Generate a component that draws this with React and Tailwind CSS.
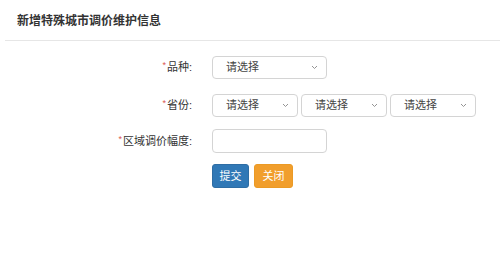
import React from 'react';

const Chevron = () => (
  <svg width="7" height="5" viewBox="0 0 7 5" className="shrink-0">
    <path d="M1 1 L3.5 3.5 L6 1" fill="none" stroke="#888" strokeWidth="0.9" />
  </svg>
);

const Select = ({ className }) => (
  <div className={`h-[23px] flex items-center justify-between pl-[13px] pr-[8px] border border-[#d4d4d4] rounded-[4px] bg-white text-[11px] text-[#444] ${className}`}>
    <span>请选择</span>
    <Chevron />
  </div>
);

const Label = ({ children }) => (
  <div className="w-[192px] shrink-0 text-right text-[11px] text-[#333] flex justify-end items-center">
    <span className="text-[#d9534f] text-[9px] leading-none mr-[1px] -mt-[4px]">*</span>
    <span>{children}</span>
  </div>
);

const App = () => {
  return (
    <div className="w-[500px] h-[254px] bg-white overflow-hidden" style={{ fontFamily: '"Liberation Sans", "Noto Sans CJK SC", sans-serif' }}>
      <div className="h-[40px] flex items-center pl-[17px] pt-[1px] text-[12px] font-semibold text-[#333]">
        新增特殊城市调价维护信息
      </div>
      <div className="ml-[5px] h-px bg-[#e6e6e6]" />

      <div className="flex flex-col pt-[15px]">
        <div className="flex items-center h-[23px]">
          <Label>品种:</Label>
          <Select className="ml-[20px] w-[115px]" />
        </div>

        <div className="flex items-center h-[23px] mt-[15px]">
          <Label>省份:</Label>
          <div className="ml-[20px] flex gap-[3px]">
            <Select className="w-[86px]" />
            <Select className="w-[86px]" />
            <Select className="w-[86px]" />
          </div>
        </div>

        <div className="flex items-center h-[24px] mt-[12px]">
          <Label>区域调价幅度:</Label>
          <div className="ml-[20px] w-[115px] h-[24px] border border-[#d4d4d4] rounded-[4px] bg-white" />
        </div>

        <div className="flex mt-[11px] ml-[212px] gap-[5px]">
          <button className="w-[37px] h-[24px] rounded-[3px] bg-[#3078b6] border border-[#2e6da4] text-white text-[11px] flex items-center justify-center">提交</button>
          <button className="w-[39px] h-[24px] rounded-[3px] bg-[#f19e2c] border border-[#eb9a25] text-white text-[11px] flex items-center justify-center">关闭</button>
        </div>
      </div>
    </div>
  );
};

export default App;
